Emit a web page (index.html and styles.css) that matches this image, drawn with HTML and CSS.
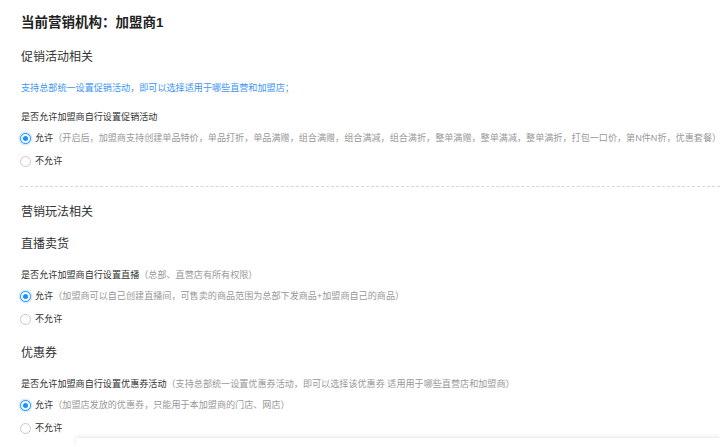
FILE: index.html
```html
<!DOCTYPE html>
<html lang="zh-CN">

<head>
    <meta charset="UTF-8">
    <meta name="viewport" content="width=device-width, initial-scale=1.0">
    <title>营销设置</title>
    <link rel="stylesheet" href="styles.css">
</head>

<body>
    <div class="page">
        <h1 class="page-title">当前营销机构：加盟商1</h1>

        <!-- 促销活动 -->
        <div class="section">
            <h2 class="section-title">促销活动相关</h2>
            <p class="tip">支持总部统一设置促销活动，即可以选择适用于哪些直营和加盟店；</p>
            <div class="field">
                <div class="field-label">是否允许加盟商自行设置促销活动</div>
                <div class="radio-group">
                    <label class="radio checked"><span class="radio-dot"></span><span class="radio-text">允许</span><span class="radio-desc">（开启后，加盟商支持创建单品特价，单品打折，单品满赠，组合满赠，组合满减，组合满折，整单满赠，整单满减，整单满折，打包一口价，第N件N折，优惠套餐）</span></label>
                    <label class="radio"><span class="radio-dot"></span><span class="radio-text">不允许</span></label>
                </div>
            </div>
        </div>

        <div class="divider"></div>

        <!-- 营销玩法 -->
        <div class="section section-play">
            <h2 class="section-title">营销玩法相关</h2>

            <h3 class="sub-title">直播卖货</h3>
            <div class="field">
                <div class="field-label">是否允许加盟商自行设置直播<span class="field-hint">（总部、直营店有所有权限）</span></div>
                <div class="radio-group">
                    <label class="radio checked"><span class="radio-dot"></span><span class="radio-text">允许</span><span class="radio-desc">（加盟商可以自己创建直播间，可售卖的商品范围为总部下发商品+加盟商自己的商品）</span></label>
                    <label class="radio"><span class="radio-dot"></span><span class="radio-text">不允许</span></label>
                </div>
            </div>

            <h3 class="sub-title">优惠券</h3>
            <div class="field">
                <div class="field-label">是否允许加盟商自行设置优惠券活动<span class="field-hint">（支持总部统一设置优惠券活动，即可以选择该优惠券 适用用于哪些直营店和加盟商）</span></div>
                <div class="radio-group">
                    <label class="radio checked"><span class="radio-dot"></span><span class="radio-text">允许</span><span class="radio-desc">（加盟店发放的优惠券，只能用于本加盟商的门店、网店）</span></label>
                    <label class="radio"><span class="radio-dot"></span><span class="radio-text">不允许</span></label>
                </div>
            </div>
        </div>
    </div>

    <!-- 底部操作栏 -->
    <div class="footer-bar"></div>
</body>

</html>
```
FILE: styles.css
```css
* {
    margin: 0;
    padding: 0;
    box-sizing: border-box;
    font-family: 'Liberation Sans', 'Noto Sans CJK SC', sans-serif;
}

body {
    background: #fff;
    color: #333;
    overflow: hidden;
}

.page {
    padding: 13px 0 0 21px;
}

.page-title {
    font-size: 13.5px;
    line-height: 20px;
    font-weight: 700;
    color: #222;
}

.section-title {
    margin-top: 15px;
    font-size: 12px;
    line-height: 18px;
    font-weight: 400;
    color: #333;
}

.tip {
    margin-top: 15px;
    font-size: 9.1px;
    line-height: 14px;
    color: #3d95f2;
}

.field {
    margin-top: 15px;
    font-size: 9.1px;
    line-height: 14px;
}

.field-label {
    color: #333;
}

.field-hint {
    color: #999;
}

.radio-group {
    margin-top: 7px;
    display: flex;
    flex-direction: column;
    gap: 9px;
}

.radio {
    display: flex;
    align-items: center;
    margin-left: -1px;
    height: 14px;
    white-space: nowrap;
    cursor: pointer;
}

.radio-dot {
    width: 11px;
    height: 11px;
    border: 1px solid #c9c9c9;
    border-radius: 50%;
    margin-right: 4px;
    background: #fff;
    position: relative;
    flex-shrink: 0;
}

.radio.checked .radio-dot {
    border-color: #1890ff;
    box-shadow: 0 0 0 1.5px rgba(24, 144, 255, 0.18);
}

.radio.checked .radio-dot::after {
    content: '';
    position: absolute;
    left: 2px;
    top: 2px;
    width: 5px;
    height: 5px;
    border-radius: 50%;
    background: #1890ff;
}

.radio-text {
    color: #333;
}

.radio-desc {
    color: #999;
}

.divider {
    margin: 18px 0 0 -1px;
    border-top: 1px dashed #cfd9df;
}

.section-play .section-title {
    margin-top: 16px;
}

.sub-title {
    margin-top: 14px;
    font-size: 12px;
    line-height: 18px;
    font-weight: 400;
    color: #333;
}

.sub-title + .field {
    margin-top: 15px;
}

.field + .sub-title {
    margin-top: 18px;
}

.footer-bar {
    position: fixed;
    left: 76px;
    right: 0;
    bottom: 0;
    height: 9px;
    background: #fff;
    box-shadow: 0 -1px 4px rgba(0, 0, 0, 0.1);
}
```
